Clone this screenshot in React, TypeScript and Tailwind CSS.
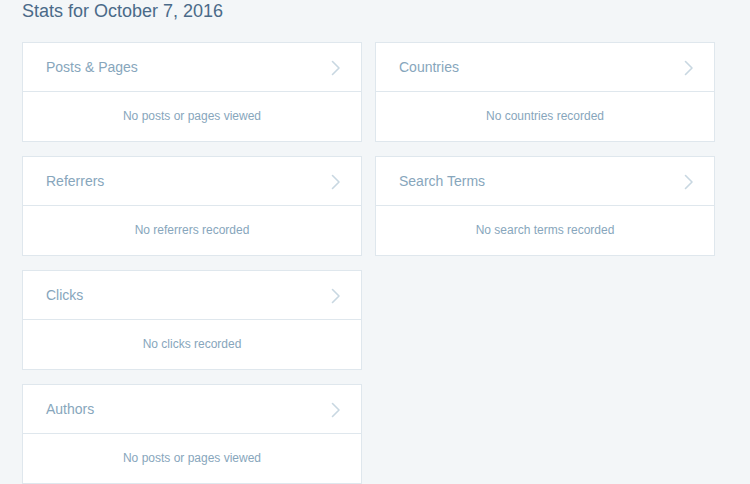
import React from 'react'

const ChevronRight = () => (
  <svg width="10" height="16" viewBox="0 0 10 16" fill="none" className="flex-shrink-0">
    <path d="M1.5 1.5 L8 8 L1.5 14.5" stroke="#c8d7e1" strokeWidth="1.6" strokeLinecap="round" strokeLinejoin="round" />
  </svg>
)

type Module = { title: string; empty: string }

const StatModule = ({ title, empty }: Module) => (
  <div className="w-[340px] bg-white border border-[#dfe7ed]">
    {/* header */}
    <div className="h-[49px] flex items-center justify-between pl-[23px] pr-[20px] pt-[1px] border-b border-[#dfe7ed]">
      <span className="text-[14px] text-[#87a6bc]">{title}</span>
      <ChevronRight />
    </div>
    {/* body */}
    <div className="h-[49px] flex items-center justify-center pb-[2px]">
      <span className="text-[12px] text-[#87a6bc]">{empty}</span>
    </div>
  </div>
)

const left: Module[] = [
  { title: 'Posts & Pages', empty: 'No posts or pages viewed' },
  { title: 'Referrers', empty: 'No referrers recorded' },
  { title: 'Clicks', empty: 'No clicks recorded' },
  { title: 'Authors', empty: 'No posts or pages viewed' },
]

const right: Module[] = [
  { title: 'Countries', empty: 'No countries recorded' },
  { title: 'Search Terms', empty: 'No search terms recorded' },
]

export default function App() {
  return (
    <div
      className="w-[750px] h-[484px] overflow-hidden bg-[#f3f6f8] pl-[22px]"
      style={{ fontFamily: '"Liberation Sans", Arial, sans-serif' }}
    >
      <div className="h-[42px] text-[18px] leading-[20px] pt-[1px] text-[#4a6a88]">Stats for October 7, 2016</div>
      <div className="flex gap-[13px] items-start">
        <div className="flex flex-col gap-[14px]">
          {left.map((m) => (
            <StatModule key={m.title} {...m} />
          ))}
        </div>
        <div className="flex flex-col gap-[14px]">
          {right.map((m) => (
            <StatModule key={m.title} {...m} />
          ))}
        </div>
      </div>
    </div>
  )
}
